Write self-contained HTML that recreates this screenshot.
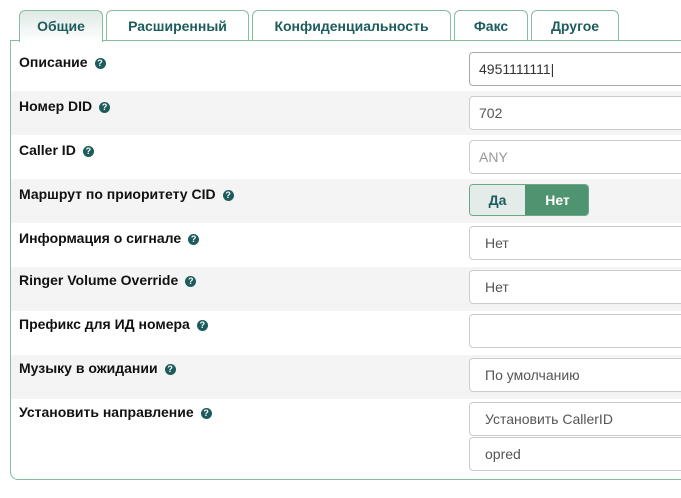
<html><head><style>
body{margin:0;width:681px;height:498px;background:#fff;font-family:"Liberation Sans",sans-serif;position:relative;overflow:hidden}
.tab{position:absolute;top:10px;height:30px;border:1px solid #86bd9c;border-bottom:none;border-radius:6px 6px 0 0;background:#fff;color:#1d5c5c;font-weight:bold;font-size:14px;text-align:center;line-height:31px;box-sizing:border-box}
.tab.act{background:linear-gradient(#dfe9e4,#fff);height:32px;z-index:2}
.panel{position:absolute;left:10px;top:40px;width:700px;height:440px;border:1px solid #86bd9c;border-radius:0 0 0 8px;box-sizing:border-box}
.row{position:absolute;left:11px;width:680px;height:44px}
.g{background:#f4f4f4}
.lbl{position:absolute;left:19px;font-weight:bold;font-size:14px;color:#111}
.q{display:inline-block;width:11px;height:11px;border-radius:50%;background:#1d5c5c;color:#fff;font-size:9px;line-height:11px;text-align:center;margin-left:7px;vertical-align:1px}
.inp{position:absolute;left:469px;width:230px;height:34px;border:1px solid #ccc;border-radius:4px;box-sizing:border-box;background:#fff;font-size:14px;color:#555;line-height:32px;padding-left:15px}
</style></head><body>
<div class="tab act" style="left:19px;width:84px">Общие</div>
<div class="tab" style="left:106px;width:143px">Расширенный</div>
<div class="tab" style="left:252px;width:199px">Конфиденциальность</div>
<div class="tab" style="left:454px;width:74px">Факс</div>
<div class="tab" style="left:531px;width:88px">Другое</div>
<div class="panel"></div>
<div class="row g" style="top:91px"></div>
<div class="row g" style="top:179px"></div>
<div class="row g" style="top:267px"></div>
<div class="row g" style="top:355px"></div>
<div class="lbl" style="top:54px">Описание<span class="q">?</span></div>
<div class="lbl" style="top:98px">Номер DID<span class="q">?</span></div>
<div class="lbl" style="top:142px">Caller ID<span class="q">?</span></div>
<div class="lbl" style="top:186px">Маршрут по приоритету CID<span class="q">?</span></div>
<div class="lbl" style="top:230px">Информация о сигнале<span class="q">?</span></div>
<div class="lbl" style="top:272px">Ringer Volume Override<span class="q">?</span></div>
<div class="lbl" style="top:316px">Префикс для ИД номера<span class="q">?</span></div>
<div class="lbl" style="top:360px">Музыку в ожидании<span class="q">?</span></div>
<div class="lbl" style="top:404px">Установить направление<span class="q">?</span></div>
<div class="inp" style="top:52px;padding-left:9px;color:#333;border-color:#aaa">4951111111|</div>
<div class="inp" style="top:96px;padding-left:9px">702</div>
<div class="inp" style="top:140px;padding-left:9px;color:#999">ANY</div>
<div style="position:absolute;left:469px;top:184px;width:120px;height:32px;border:1px solid #6aa888;border-radius:4px;box-sizing:border-box;overflow:hidden;font-weight:bold;font-size:14px;line-height:30px">
<div style="position:absolute;left:0;width:55px;height:30px;background:#e3ece8;color:#1d5c5c;text-align:center">Да</div>
<div style="position:absolute;left:55px;width:65px;height:30px;background:#4e9470;color:#fff;text-align:center">Нет</div></div>
<div class="inp" style="top:226px">Нет</div>
<div class="inp" style="top:270px">Нет</div>
<div class="inp" style="top:314px"></div>
<div class="inp" style="top:358px">По умолчанию</div>
<div class="inp" style="top:402px">Установить CallerID</div>
<div class="inp" style="top:437px">opred</div>
</body></html>
